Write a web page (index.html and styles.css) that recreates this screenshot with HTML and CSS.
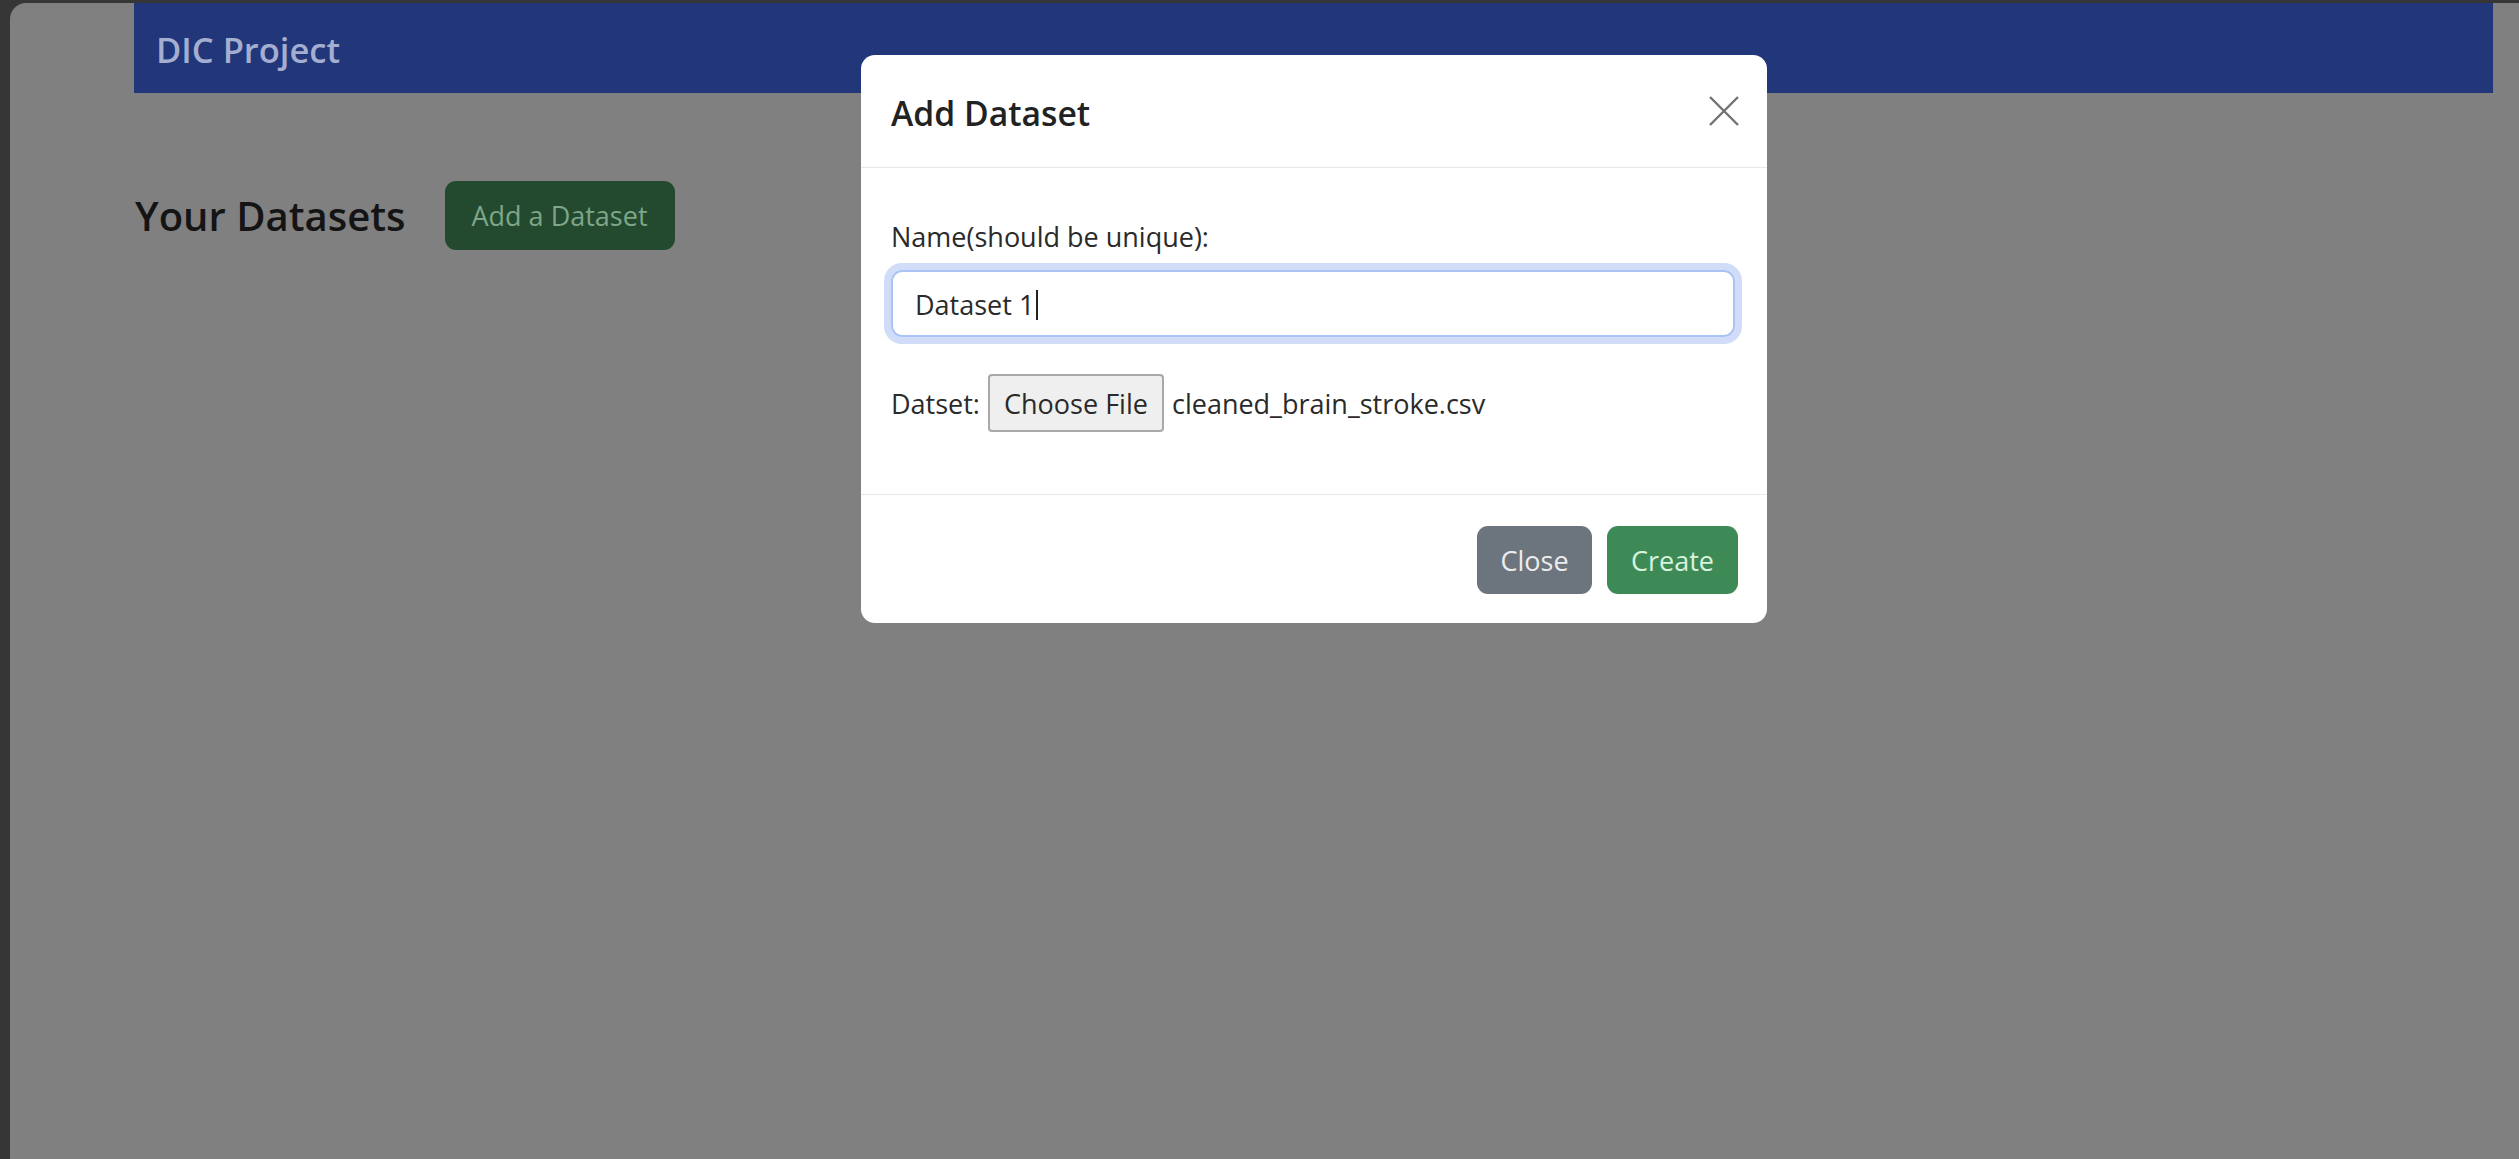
FILE: index.html
```html
<!DOCTYPE html>
<html lang="en">
<head>
<meta charset="utf-8">
<title>DIC Project</title>
<link rel="stylesheet" href="styles.css">
</head>
<body>
<div class="frame">
  <div class="page">
    <nav class="navbar"><span class="brand">DIC Project</span></nav>
    <main class="content">
      <h4 class="title">Your Datasets</h4>
      <button class="btn btn-add">Add a Dataset</button>
    </main>
  </div>
</div>
<div class="overlay">
  <div class="modal">
    <div class="modal-header">
      <h5 class="modal-title">Add Dataset</h5>
      <span class="btn-close" aria-label="Close">
        <svg width="30" height="30" viewBox="0 0 30 30"><path d="M1 1 L29 29 M29 1 L1 29" stroke="#727272" stroke-width="2.4" fill="none"/></svg>
      </span>
    </div>
    <div class="modal-body">
      <label class="form-label">Name(should be unique):</label>
      <div class="form-control"><span class="val">Dataset 1</span><span class="caret"></span></div>
      <div class="file-row">
        <span class="file-label">Datset:</span>
        <span class="file-btn">Choose File</span>
        <span class="file-name">cleaned_brain_stroke.csv</span>
      </div>
    </div>
    <div class="modal-footer">
      <button class="btn btn-close-gray">Close</button>
      <button class="btn btn-create">Create</button>
    </div>
  </div>
</div>
</body>
</html>
```
FILE: styles.css
```css
* { box-sizing: border-box; }
html, body { margin: 0; height: 100%; }
body {
  background: #363636;
  font-family: "Open Sans", "Noto Sans", sans-serif;
  overflow: hidden;
}
.frame {
  height: 100%;
  padding: 3px 0 0 10px;
}
.page {
  height: 100%;
  background: #808080;
  border-top-left-radius: 16px;
}
.navbar {
  margin-left: 124px;
  width: 2359px;
  height: 90px;
  background: #22367a;
  display: flex;
  align-items: center;
  padding: 5px 0 0 22px;
}
.brand {
  font-size: 34.5px;
  font-weight: 600;
  color: #a4aed0;
  line-height: 1;
}
.content {
  margin: 88px 0 0 125px;
  display: flex;
  align-items: center;
  gap: 39px;
}
.title {
  margin: 0;
  font-size: 40px;
  font-weight: 600;
  color: #141414;
  line-height: 1;
}
.btn {
  font-family: inherit;
  border: none;
  padding: 0;
  font-size: 27px;
  display: flex;
  align-items: center;
  justify-content: center;
  border-radius: 11px;
}
.btn-add {
  width: 230px;
  height: 69px;
  background: #234a2f;
  color: #7ea689;
}
.overlay {
  position: fixed;
  inset: 0;
  padding: 55px 0 0 861px;
}
.modal {
  width: 906px;
  background: #fff;
  border-radius: 14px;
}
.modal-header {
  height: 113px;
  display: flex;
  align-items: center;
  justify-content: space-between;
  padding: 0 28px 0 30px;
  border-bottom: 1px solid #e8e8e8;
}
.modal-title {
  margin: 5px 0 0;
  font-size: 33.7px;
  font-weight: 600;
  color: #222;
  line-height: 1;
}
.btn-close { display: flex; }
.modal-body {
  height: 326px;
  padding: 47px 32px 0 30px;
  color: #2a2a2a;
  font-size: 27px;
}
.form-label {
  display: block;
  line-height: 43px;
}
.form-control {
  margin-top: 12px;
  height: 67px;
  border: 2px solid #a9c3f4;
  box-shadow: 0 0 0 7px #d0dcf8;
  border-radius: 11px;
  display: flex;
  align-items: center;
  padding: 2px 0 0 22px;
}
.caret {
  display: inline-block;
  width: 2px;
  height: 30px;
  background: #222;
  margin-left: 2px;
}
.file-row {
  margin-top: 37px;
  display: flex;
  align-items: center;
  gap: 8px;
}
.file-btn {
  width: 176px;
  height: 58px;
  background: #efefef;
  border: 2px solid #a8a8a8;
  border-radius: 4px;
  display: flex;
  align-items: center;
  justify-content: center;
}
.modal-footer {
  height: 129px;
  border-top: 1px solid #e8e8e8;
  display: flex;
  align-items: center;
  justify-content: flex-end;
  gap: 15px;
  padding: 2px 29px 0 0;
}
.btn-close-gray {
  width: 115px;
  height: 68px;
  background: #6c747e;
  color: #ececec;
}
.btn-create {
  width: 131px;
  height: 68px;
  background: #3e8a56;
  color: #d8f3df;
}
```
